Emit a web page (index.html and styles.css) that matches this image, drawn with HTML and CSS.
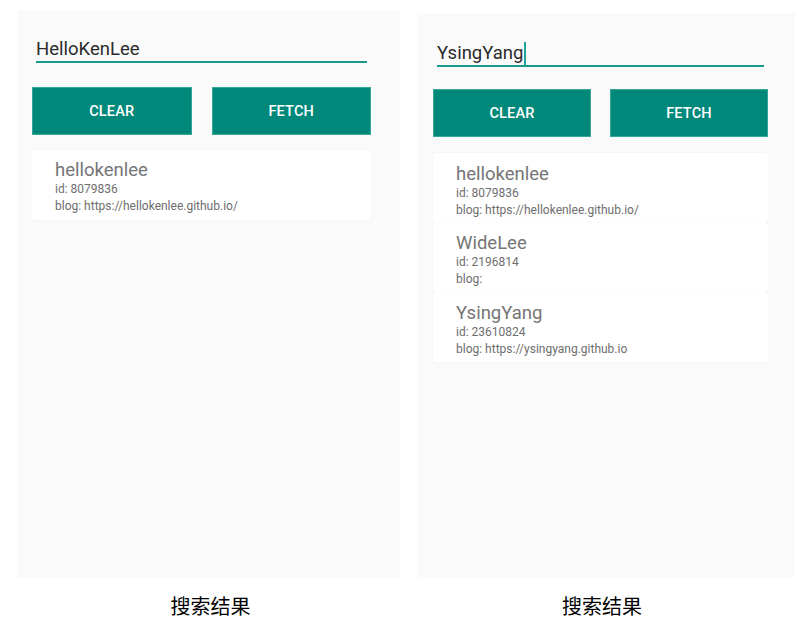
FILE: index.html
```html
<!DOCTYPE html>
<html lang="zh">
<head>
<meta charset="utf-8">
<title>搜索结果</title>
<link rel="stylesheet" href="styles.css">
</head>
<body>
<div class="page">
  <figure class="shot shot--left">
    <div class="panel panel--left">
      <div class="field"><span class="field-text">HelloKenLee</span></div>
      <div class="actions">
        <div class="btn">CLEAR</div>
        <div class="btn">FETCH</div>
      </div>
      <div class="list">
        <div class="card">
          <div class="card-title">hellokenlee</div>
          <div class="card-line">id: 8079836</div>
          <div class="card-line">blog: https://hellokenlee.github.io/</div>
        </div>
      </div>
    </div>
    <figcaption class="caption">搜索结果</figcaption>
  </figure>

  <figure class="shot shot--right">
    <div class="panel panel--right">
      <div class="field"><span class="field-text">YsingYang</span><span class="cursor"></span></div>
      <div class="actions">
        <div class="btn">CLEAR</div>
        <div class="btn">FETCH</div>
      </div>
      <div class="list">
        <div class="card">
          <div class="card-title">hellokenlee</div>
          <div class="card-line">id: 8079836</div>
          <div class="card-line">blog: https://hellokenlee.github.io/</div>
        </div>
        <div class="card">
          <div class="card-title">WideLee</div>
          <div class="card-line">id: 2196814</div>
          <div class="card-line">blog:</div>
        </div>
        <div class="card">
          <div class="card-title">YsingYang</div>
          <div class="card-line">id: 23610824</div>
          <div class="card-line">blog: https://ysingyang.github.io</div>
        </div>
      </div>
    </div>
    <figcaption class="caption">搜索结果</figcaption>
  </figure>
</div>
</body>
</html>
```

FILE: styles.css
```css
html, body {
  margin: 0;
  padding: 0;
  background: #ffffff;
}

body {
  font-family: Roboto, "Noto Sans", "Noto Sans CJK SC", sans-serif;
}

.page {
  display: flex;
  align-items: flex-start;
  padding-left: 17px;
  gap: 17px;
}

.shot {
  margin: 0;
  display: flex;
  flex-direction: column;
}

.shot--left {
  padding-top: 10px;
}

.shot--right {
  padding-top: 13px;
}

.panel {
  background: #fafafa;
  box-sizing: border-box;
  display: flex;
  flex-direction: column;
}

.panel--left {
  width: 383px;
  height: 568px;
  padding: 27px 29px 0 15px;
}

.panel--right {
  width: 378px;
  height: 564px;
  padding: 27.5px 27px 0 16px;
}

.field {
  margin: 0 4px;
  height: 24px;
  border-bottom: 2px solid #1a998a;
  display: flex;
  align-items: center;
}

.field-text {
  font-size: 18.5px;
  line-height: 24px;
  color: #2b2b2b;
}

.cursor {
  display: inline-block;
  width: 2px;
  height: 24px;
  margin-left: 1px;
  margin-top: 2px;
  background: #1fa394;
}

.actions {
  display: flex;
  gap: 20px;
  margin-top: 24px;
}

.panel--right .actions {
  gap: 19px;
  margin-top: 22.5px;
}

.btn {
  flex: 1;
  height: 48px;
  box-sizing: border-box;
  background: #00897b;
  border: 1px solid #35a699;
  color: #ffffff;
  font-size: 14.5px;
  font-weight: 500;
  letter-spacing: 0.2px;
  display: flex;
  align-items: center;
  justify-content: center;
}

.list {
  margin-top: 15px;
  display: flex;
  flex-direction: column;
}

.panel--right .list {
  margin-top: 16px;
}

.card {
  background: #ffffff;
  border-radius: 2px;
  box-shadow: 0 0 1px rgba(0, 0, 0, 0.14);
  height: 70px;
  box-sizing: border-box;
  padding: 9px 23px 5px;
}

.panel--right .card {
  height: 69.5px;
  padding-top: 9.5px;
}

.card-title {
  font-size: 18.5px;
  line-height: 22px;
  color: #757575;
}

.card-line {
  font-size: 12px;
  line-height: 17px;
  color: #6e6e6e;
}

.caption {
  font-family: "Noto Sans CJK SC", sans-serif;
  font-size: 20px;
  line-height: 28px;
  color: #000000;
  text-align: center;
  margin-top: 14px;
}

.shot--left .caption {
  padding-left: 4px;
}

.shot--right .caption {
  margin-top: 15px;
  padding-right: 8px;
}
```
